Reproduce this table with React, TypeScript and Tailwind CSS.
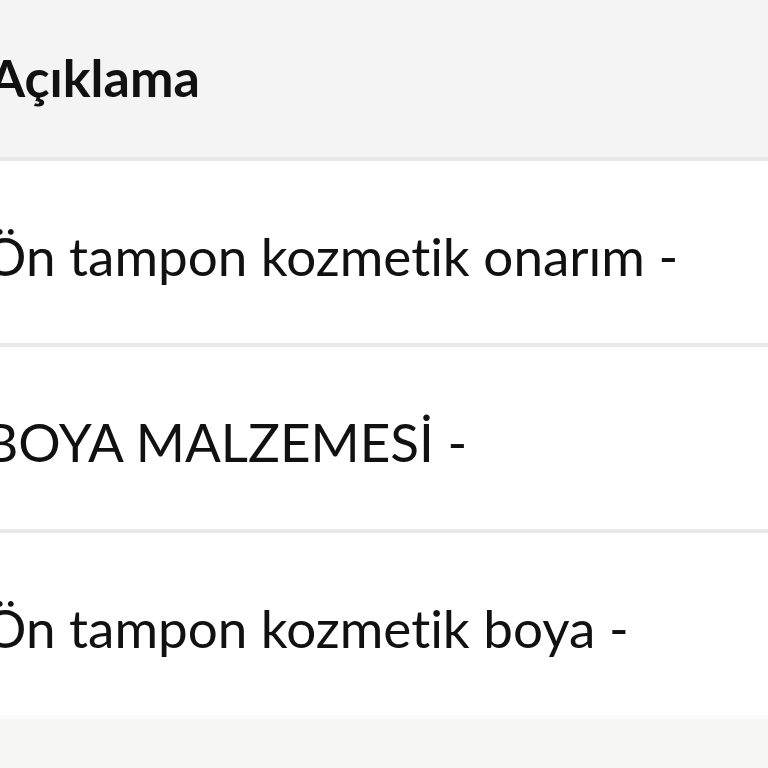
const rows = ["Ön tampon kozmetik onarım -", "BOYA MALZEMESİ -", "Ön tampon kozmetik boya -"]

export default function App() {
  return (
    <div className="h-[768px] w-[768px] overflow-hidden bg-[#f7f7f6] text-[#111111] [font-variant-ligatures:none]" style={{ fontFamily: "Lato, 'Noto Sans', sans-serif" }}>
      <div className="flex h-[161px] items-center border-b-4 border-[#e8e8e8] bg-[#f4f4f4] pb-[4px]">
        <span className="-ml-[11px] text-[52px] font-bold leading-none">Açıklama</span>
      </div>
      {rows.map((r, i) => (
        <div key={i} className="flex h-[186px] items-center border-b-4 border-[#e8e8e8] bg-white pt-[6px] last:border-[#fbfbfb]">
          <span className="-ml-[16px] text-[53px] leading-none">{r}</span>
        </div>
      ))}
    </div>
  )
}
